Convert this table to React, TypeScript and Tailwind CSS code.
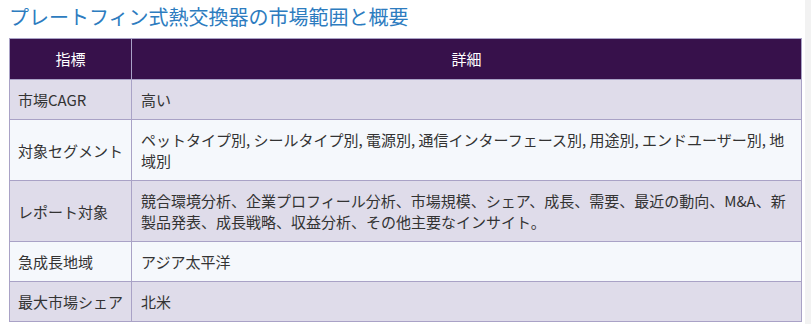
import React from 'react';

const rows: { label: string; detail: string }[] = [
  { label: '市場CAGR', detail: '高い' },
  {
    label: '対象セグメント',
    detail:
      'ペットタイプ別, シールタイプ別, 電源別, 通信インターフェース別, 用途別, エンドユーザー別, 地域別',
  },
  {
    label: 'レポート対象',
    detail:
      '競合環境分析、企業プロフィール分析、市場規模、シェア、成長、需要、最近の動向、M&A、新製品発表、成長戦略、収益分析、その他主要なインサイト。',
  },
  { label: '急成長地域', detail: 'アジア太平洋' },
  { label: '最大市場シェア', detail: '北米' },
];

const App: React.FC = () => {
  return (
    <div
      className="flex min-h-[324px] w-[811px] bg-white"
      style={{ fontFamily: '"Noto Sans CJK JP", "Noto Sans", sans-serif' }}
    >
      <div className="flex-1 pl-[9px] pt-[3px]">
        {/* Heading */}
        <h2 className="text-[20px] leading-[28px] text-[#2d7cbf] font-normal mb-[7px]">
          プレートフィン式熱交換器の市場範囲と概要
        </h2>

        {/* Overview table */}
        <table className="w-[793px] border-collapse text-[15px] text-[#333]">
          <thead>
            <tr className="bg-[#37114b] text-white">
              <th className="w-[122px] border border-[#a9a2c6] py-[9px] leading-[22px] font-normal text-center">
                指標
              </th>
              <th className="border border-[#a9a2c6] py-[9px] leading-[22px] font-normal text-center">
                詳細
              </th>
            </tr>
          </thead>
          <tbody>
            {rows.map((r, i) => (
              <tr key={r.label} className={i % 2 === 0 ? 'bg-[#dfdcea]' : 'bg-[#f5f8fc]'}>
                <td className="border border-[#a9a2c6] pl-[8px] pr-[4px] py-[9px] leading-[21px] align-middle whitespace-nowrap">
                  {r.label}
                </td>
                <td className="border border-[#a9a2c6] pl-[9px] pr-[8px] py-[9px] leading-[21px] align-middle">
                  {r.detail}
                </td>
              </tr>
            ))}
          </tbody>
        </table>
      </div>
      {/* scrollbar strip */}
      <div className="w-[6px] bg-[#f2f2f2]" />
    </div>
  );
};

export default App;
